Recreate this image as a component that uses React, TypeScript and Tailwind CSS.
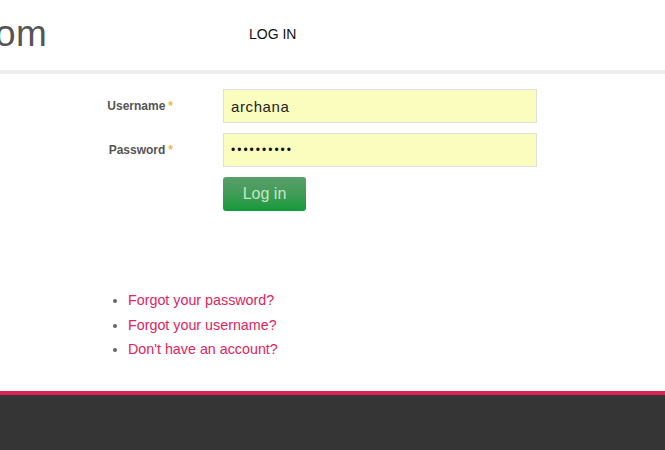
/**
 * Login page: header, form, help links, footer
 */

import { useState } from 'react'

export default function App() {
  const [username, setUsername] = useState('archana')
  const [password, setPassword] = useState('abcdefghij')

  return (
    <div className="flex flex-col w-[665px] h-[450px] overflow-hidden bg-white font-['Liberation_Sans',Arial,sans-serif]">
      <header className="flex items-center h-[70px] border-b-4 border-[#eeeeee] box-content">
        <div className="w-[254px] -ml-[5px] -mt-[4px] text-[37px] leading-none text-[#555555] tracking-[0.5px]">om</div>
        <nav className="text-[14px] text-[#111111] -mt-[1px]">LOG IN</nav>
      </header>

      <main className="flex-1 flex flex-col">
        <form className="flex flex-col gap-[10px] mt-[15px]" onSubmit={(e) => e.preventDefault()}>
          <div className="flex items-center">
            <label className="w-[173px] text-right text-[12px] font-bold text-[#555555]">
              Username<span className="ml-[3px] text-[#f5b546]">*</span>
            </label>
            <input
              value={username}
              onChange={(e) => setUsername(e.target.value)}
              className="ml-[50px] w-[314px] h-[34px] px-[7px] border border-[#e0e0e0] bg-[#fafdbe] text-[15px] tracking-[0.6px] text-[#222222] outline-none"
            />
          </div>
          <div className="flex items-center">
            <label className="w-[173px] text-right text-[12px] font-bold text-[#555555]">
              Password<span className="ml-[3px] text-[#f5b546]">*</span>
            </label>
            <input
              type="password"
              value={password}
              onChange={(e) => setPassword(e.target.value)}
              className="ml-[50px] w-[314px] h-[34px] px-[7px] border border-[#e0e0e0] bg-[#fafdbe] text-[12px] tracking-[2px] text-[#111111] outline-none"
            />
          </div>
          <div className="pl-[223px]">
            <button
              type="submit"
              className="w-[83px] h-[34px] rounded-[3px] bg-gradient-to-b from-[#5a9e6c] to-[#0c9a3a] text-[16px] text-[#c9e4cb]"
            >
              Log in
            </button>
          </div>
        </form>

        <ul className="mt-[80px] ml-[128px] flex flex-col gap-[5px] list-disc text-[14.3px] leading-[19.5px] text-[#e0245e] marker:text-[#666666]">
          <li><a href="#">Forgot your password?</a></li>
          <li><a href="#">Forgot your username?</a></li>
          <li><a href="#">Don't have an account?</a></li>
        </ul>
      </main>

      <footer className="h-[59px] border-t-4 border-[#dc2450] bg-[#353535]" />
    </div>
  )
}
